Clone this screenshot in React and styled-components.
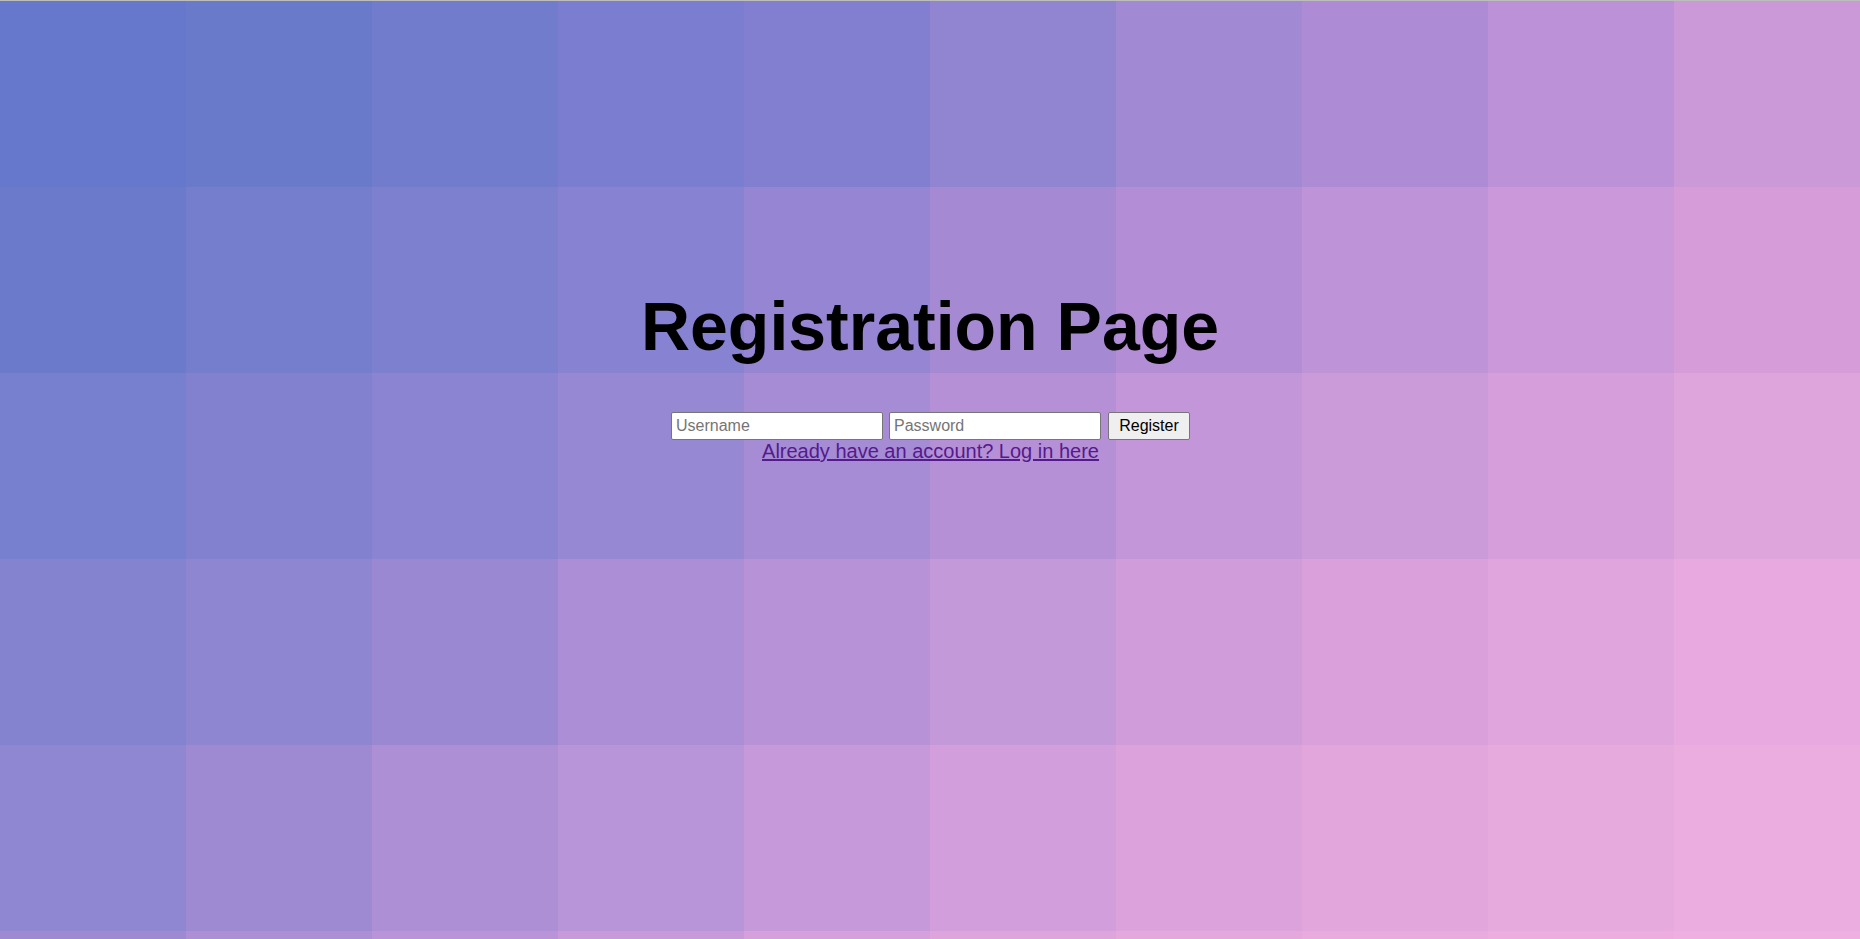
import React from "react";
import styled, { createGlobalStyle } from "styled-components";

const GlobalStyle = createGlobalStyle`
  html, body {
    margin: 0;
    padding: 0;
  }
  body {
    font-family: "Liberation Sans", Arial, sans-serif;
    border-top: 1px solid #bdbdbd;
    overflow: hidden;
  }
`;

const TILE_ROWS = [
  ["#6678CB", "#6A7ACB", "#717CCD", "#7B7ED0", "#837FD0", "#9184D0", "#A189D3", "#AD8BD5", "#BD91D7", "#CB98D8"],
  ["#6C7ACC", "#757ECC", "#7D80CF", "#8882D3", "#9585D2", "#A589D2", "#B38DD5", "#BE93D7", "#CB98D9", "#D69CD9"],
  ["#777FCF", "#8281CF", "#8A84D2", "#9788D3", "#A58CD4", "#B690D6", "#C296D8", "#CB9BD9", "#D69EDA", "#DEA4DC"],
  ["#8383D0", "#8E86D0", "#9A89D2", "#AB8ED6", "#B892D7", "#C399D9", "#D09DDA", "#DAA0DB", "#E0A5DD", "#E7A9DF"],
  ["#8F87D1", "#9D8AD3", "#AD8FD6", "#B894D9", "#C69ADA", "#D29EDB", "#DCA2DC", "#E2A6DD", "#E7AADD", "#EBACDF"],
  ["#9E8AD3", "#AD8FD6", "#BA94D8", "#C89ADA", "#D5A0DB", "#DEA4DC", "#E5A8DD", "#E9ABDE", "#EDADDF", "#EFAFE0"],
];

const Page = styled.div`
  position: relative;
  min-height: calc(100vh - 1px);
`;

const TileLayer = styled.div`
  position: absolute;
  inset: 0;
  z-index: 0;
  overflow: hidden;
  display: grid;
  grid-template-columns: repeat(10, 1fr);
  grid-auto-rows: 10vw;
`;

const Tile = styled.div`
  width: 100%;
  height: 100%;
`;

const Content = styled.main`
  position: relative;
  z-index: 1;
  display: flex;
  flex-direction: column;
  align-items: center;
  padding-top: 286px;
`;

const Title = styled.h1`
  margin: 0 0 47px;
  font-size: 68px;
  font-weight: 700;
  color: #000;
  line-height: normal;
`;

const Form = styled.form`
  display: flex;
  align-items: center;
  gap: 6px;
  padding-left: 1px;
`;

const Field = styled.input`
  box-sizing: border-box;
  width: 212px;
  height: 28px;
  padding: 0 4px;
  border: 1px solid #767676;
  border-radius: 2px;
  background: #fff;
  font-family: "Liberation Sans", Arial, sans-serif;
  font-size: 16px;
  color: #000;
  outline: none;

  &::placeholder {
    color: #757575;
  }
`;

const Button = styled.button`
  box-sizing: border-box;
  width: 82px;
  height: 28px;
  margin-left: 1px;
  padding: 0 8px;
  border: 1px solid #767676;
  border-radius: 2px;
  background: #efefef;
  font-family: "Liberation Sans", Arial, sans-serif;
  font-size: 16px;
  color: #000;
`;

const LoginLink = styled.a`
  font-size: 20px;
  color: #551a8b;
  text-decoration: underline;
  line-height: normal;
  padding-left: 1px;
`;

export default function App() {
  return (
    <>
      <GlobalStyle />
      <Page>
        <TileLayer>
          {TILE_ROWS.map((row, r) =>
            row.map((color, c) => <Tile key={`${r}-${c}`} style={{ background: color }} />)
          )}
        </TileLayer>
        <Content>
          <Title>Registration Page</Title>
          <Form onSubmit={(e) => e.preventDefault()}>
            <Field type="text" placeholder="Username" />
            <Field type="password" placeholder="Password" />
            <Button type="submit">Register</Button>
          </Form>
          <LoginLink href="#login">Already have an account? Log in here</LoginLink>
        </Content>
      </Page>
    </>
  );
}
